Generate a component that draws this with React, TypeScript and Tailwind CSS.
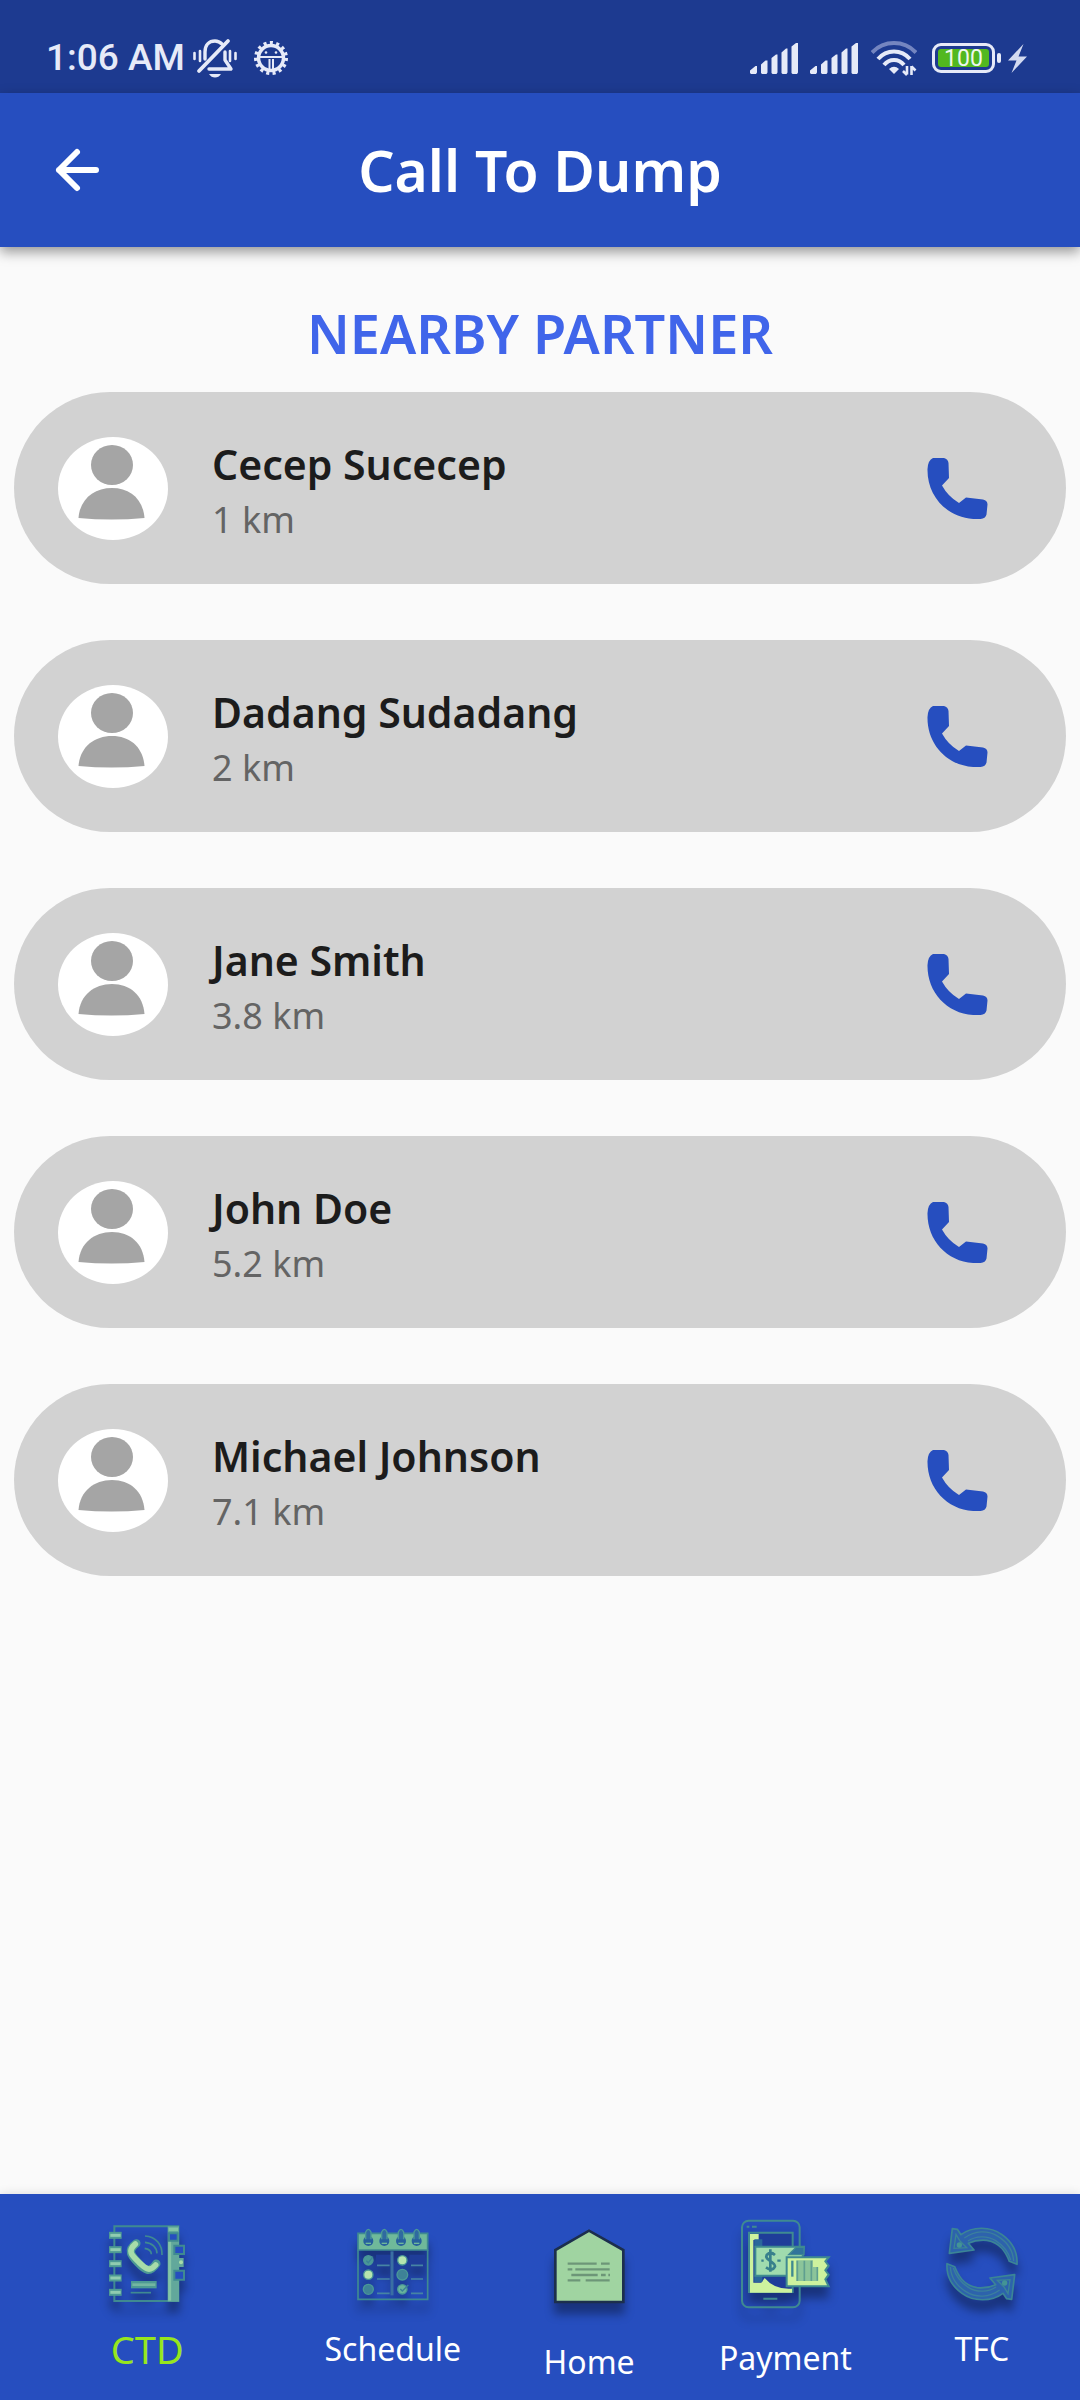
import type { ReactNode } from "react";

const partners = [
  { name: "Cecep Sucecep", distance: "1 km" },
  { name: "Dadang Sudadang", distance: "2 km" },
  { name: "Jane Smith", distance: "3.8 km" },
  { name: "John Doe", distance: "5.2 km" },
  { name: "Michael Johnson", distance: "7.1 km" },
];

function BellOffIcon() {
  return (
    <svg className="h-10 w-11" viewBox="0 0 44 40" fill="none" stroke="#e6eaf8" strokeWidth="3.4" strokeLinecap="round" aria-hidden="true">
      <path d="M12 21V14C12 7 16 3 22 3c3 0 5 1 7 3" />
      <path d="M6 33L35 3" strokeWidth="3.8" />
      <path d="M32 14v8l6 9H16" strokeLinejoin="round" />
      <path d="M16 36h12c-1.500 2.500-3.500 3.500-6 3.500s-4.500-1-6-3.500z" fill="#e6eaf8" stroke="none" />
      <path d="M1.500 15v6M7 13v10M37 13v10M42.500 15v6" strokeWidth="2.600" />
    </svg>
  );
}

function GearIcon() {
  return (
    <svg className="size-9" viewBox="0 0 36 36" fill="none" stroke="#e6eaf8" aria-hidden="true">
      <circle cx="18" cy="18" r="15" strokeWidth="4" strokeDasharray="3 3.283" />
      <circle cx="18" cy="18" r="12.500" strokeWidth="3.500" />
      <path d="M6 17h24M16.500 19v13M20 19v13" strokeWidth="2" />
      <circle cx="13" cy="12.500" r="1.300" fill="#e6eaf8" stroke="none" />
      <circle cx="23" cy="12.500" r="1.300" fill="#e6eaf8" stroke="none" />
    </svg>
  );
}

function SignalIcon() {
  return (
    <svg className="h-[31px] w-12" viewBox="0 0 48 31" fill="#e6eaf8" aria-hidden="true">
      <path d="M0 27.500L5.500 23H7v6.500L6 31H1L0 30zM11 21.500L15.500 17.500H17.500V29.500L16.500 31H12L11 30zM21.500 15L26 11.500H27.500V29.500L26.500 31H22.500L21.500 30zM31.500 9.500L36 5.500H37.500V29.500L36.500 31H32.500L31.500 30zM41.500 3.500L46 0H48V29.500L47 31H42.500L41.500 30z" />
    </svg>
  );
}

function WifiIcon() {
  return (
    <svg className="h-[35px] w-[46px]" viewBox="0 0 46 35" fill="none" stroke="#e6eaf8" strokeWidth="4" aria-hidden="true">
      <path d="M1 11.500Q10 2 23 2T45 11.500" stroke="#7485c0" />
      <path d="M7 18Q13.500 10.500 23 10.500T39 18" />
      <path d="M13 24Q17 19 23 19T33 24" />
      <path d="M18 28q5-4.500 10 0l-5 5z" fill="#e6eaf8" stroke="none" />
      <path d="M36 25v8.500M40.500 34v-9M32 30l4 4M40.500 25.500l4 4" strokeWidth="2.600" />
    </svg>
  );
}

function StatusBar() {
  return (
    <div className="flex h-[93px] items-center justify-between bg-[#1d3a90] pt-[23px] pr-[53px] pl-[46px]">
      <div className="flex items-center">
        <span className="font-[Roboto,sans-serif] text-[37px] leading-10 font-medium text-[#e6eaf8]">1:06 AM</span>
        <span className="ml-2">
          <BellOffIcon />
        </span>
        <span className="ml-4">
          <GearIcon />
        </span>
      </div>
      <div className="flex items-center">
        <SignalIcon />
        <span className="ml-3">
          <SignalIcon />
        </span>
        <span className="ml-[13px]">
          <WifiIcon />
        </span>
        <span className="ml-[15px] flex h-[30px] w-[63px] rounded-[9px] border-[3px] border-[#e6eaf8] p-[3px]">
          <span className="flex flex-1 items-center justify-center rounded-[3px] bg-[#52b81f] font-[Roboto,sans-serif] text-[23px] leading-none text-[#eef7ee]">
            100
          </span>
        </span>
        <span className="ml-[2px] h-[10px] w-1 rounded-sm bg-[#e6eaf8]" />
        <svg className="ml-[7px] h-[29px] w-[19px]" viewBox="0 0 19 29" fill="#d3daf1" aria-hidden="true">
          <path d="M15.500 0L0 16.500h8.500L3.500 29 19 12.500h-8.500z" />
        </svg>
      </div>
    </div>
  );
}

function Header() {
  return (
    <header className="grid h-[154px] grid-cols-[1fr_auto_1fr] items-center bg-[#264ebf] px-[54px] shadow-[0_5px_12px_rgba(0,0,0,0.4)]">
      <button type="button" aria-label="Back" className="w-12 text-white">
        <svg className="size-12" viewBox="0 0 48 48" fill="none" stroke="currentColor" strokeWidth="6" strokeLinecap="round" strokeLinejoin="round" aria-hidden="true">
          <path d="M23 6L5 24l18 18M5 24h37" />
        </svg>
      </button>
      <h1 className="text-[57px] leading-[64px] font-semibold text-white">Call To Dump</h1>
    </header>
  );
}

function Avatar() {
  return (
    <svg className="h-[103px] w-[110px] shrink-0" viewBox="0 0 110 103" aria-hidden="true">
      <ellipse cx="55" cy="51.500" rx="55" ry="51.500" fill="#fff" />
      <ellipse cx="54" cy="28" rx="21" ry="20" fill="#a5a5a5" />
      <path d="M20.500 81C22 62 36 51 54 51s31 11 32.500 30q-33 3-66 0z" fill="#a5a5a5" />
    </svg>
  );
}

function PartnerCard({ name, distance }: { name: string; distance: string }) {
  return (
    <li className="flex h-48 items-center rounded-full bg-[#d2d2d2] pr-[78px] pl-11">
      <Avatar />
      <div className="ml-11 flex-1 pt-2">
        <h3 className="text-[41px] leading-[56px] font-semibold text-[#1c1c1c]">{name}</h3>
        <p className="text-[36px] leading-[56px] text-[#646464]">{distance}</p>
      </div>
      <button type="button" aria-label={`Call ${name}`} className="text-[#264ebf]">
        <svg className="h-[61px] w-[61px]" viewBox="0 0 61 61" fill="currentColor" aria-hidden="true">
          <path d="M6 0h11q4 1 4.500 5l.5 15-7 7.500q6 11 17 17.500l7-5.500 17 2q4.500 1 4.500 5l-1 10q-1 4-6 4.500C23 63 0 40 .5 11Q1 2 6 0z" />
        </svg>
      </button>
    </li>
  );
}

function NavIcon({ viewBox, children }: { viewBox: string; children: ReactNode }) {
  return (
    <svg
      className="size-[90px] overflow-visible drop-shadow-[0_11px_5px_rgba(0,0,0,0.35)]"
      viewBox={viewBox}
      fill="none"
      stroke="#3f8a91"
      strokeWidth="6"
      aria-hidden="true"
    >
      {children}
    </svg>
  );
}

function ContactsIcon() {
  return (
    <NavIcon viewBox="69 111 270 270">
      <path d="M106 363V139h192v224z" />
      <path d="M266 139h34v226h-34z" fill="#62a89b" stroke="none" />
      <path d="M272 160v202" stroke="#84c4a6" strokeWidth="9" />
      <path d="M269 148h28" stroke="#84c4a6" strokeWidth="10" />
      <path d="M270 160h26v22h-26zM286 197h29v25h-29zM286 272h29v27h-29z" fill="#264ebf" />
      <path d="M298 234h16v27h-16z" fill="#62a89b" stroke="none" />
      <circle cx="306" cy="247" r="6" fill="#a7dca9" stroke="none" />
      {[166, 209, 251, 294, 337].map((y) => (
        <g key={y}>
          <path d={`M90 ${y}h38`} stroke="#4d9a94" strokeWidth="21" />
          <path d={`M94 ${y}h31`} stroke="#90ccb0" strokeWidth="9" />
        </g>
      ))}
      <path d="M172 190C142 212 158 228 178 249S211 281 232 251" stroke="#4d9a94" strokeWidth="25" strokeLinecap="round" />
      <path d="M169 192C143 214 160 228 180 247S211 277 230 255" stroke="#a7dca9" strokeWidth="17" strokeLinecap="round" strokeLinejoin="round" />
      <path d="M198 168C232 170 250 195 249 225M198 187C220 189 233 203 234 220M197 205C210 207 217 214 217 223" strokeWidth="5" />
      <path d="M156 314h77" stroke="#4d9a94" strokeWidth="22" />
      <path d="M160 314h69" stroke="#73b6a2" strokeWidth="8" />
      <path d="M155 338h61" strokeWidth="5" />
    </NavIcon>
  );
}

function CalendarIcon() {
  return (
    <NavIcon viewBox="144 111 270 270">
      <path d="M228 224h48v30h-48zM328 224h48v30h-48z" fill="#1f3d99" stroke="none" />
      <path d="M174 160h209v50H174z" fill="#6fb99a" strokeWidth="5" />
      <path d="M174 210v148h209V210" strokeWidth="5" />
      <path d="M276 214v132" stroke="#3a6fa3" strokeWidth="9" />
      {[205, 253, 303, 350].map((x) => (
        <g key={x}>
          <circle cx={x} cy="183" r="15" fill="#27609d" stroke="none" />
          <path d={`M${x - 8} 178v-22q8-16 16 0v22`} fill="#2f6aa0" stroke="#4a9897" strokeWidth="4" />
          <path d={`M${x - 8} 190h16`} stroke="#6fb99a" strokeWidth="4" />
        </g>
      ))}
      <g stroke="#4a9897" strokeWidth="4">
        <circle cx="205" cy="241" r="14" fill="#4a9897" />
        <circle cx="205" cy="284" r="14" fill="#b5e5ae" />
        <circle cx="205" cy="328" r="15" fill="#3e8297" />
        <circle cx="307" cy="241" r="14" fill="#b5e5ae" />
        <circle cx="307" cy="284" r="16" fill="#3e8297" />
        <circle cx="307" cy="328" r="14" fill="#69b39c" />
      </g>
      <path d="M231 256h38M231 297h38M231 340h38M333 256h36M333 297h36M333 340h36" stroke="#4684a4" strokeWidth="5" />
      <path d="M199 242l6 6 14-18M301 327l6 6 18-18" stroke="#3a8297" strokeWidth="4" />
    </NavIcon>
  );
}

function LetterIcon() {
  return (
    <NavIcon viewBox="132 111 270 270">
      <path d="M166 366V210l101-58 103 58v156z" fill="#a0d4a1" stroke="#1c2f4d" strokeWidth="8" />
      <path
        d="M203 251h87M303 251h26M203 268h14M226 268h103M214 285h79M303 285h14M325 285h5M203 301h38M257 301h72"
        stroke="#6d9678"
        strokeWidth="7"
      />
    </NavIcon>
  );
}

function PaymentIcon() {
  return (
    <NavIcon viewBox="120 111 270 270">
      <rect x="126" y="122" width="173" height="260" rx="20" strokeWidth="6" />
      <path d="M140 140h8M156 140h14M190 356h42" strokeWidth="6" />
      <path d="M147 158h131v178H147z" fill="#1f3d99" />
      <path d="M150 162h26v18h-16v128h24l10-14q30 36 82 32v12H150z" fill="#cdf29e" stroke="none" />
      <path d="M163 178h24v22h-24zM163 286h24v20h-24z" fill="#2b679b" stroke="none" />
      <path d="M166 200h146l-12 87H166z" fill="#a0dbae" strokeWidth="6" />
      <path d="M288 202h24v22h-46z" fill="#31749b" strokeWidth="4" />
      <path d="M225 225q-13-12-25 0c-8 14 25 20 25 34q-8 17-27 3M211 208v67" stroke="#38808c" strokeWidth="8" />
      <path d="M184 242h7M232 242h10" stroke="#38808c" strokeWidth="7" />
      <path d="M260 232h126l-10 12 10 13-10 14 10 13-10 14 10 21H260z" fill="#cdf29e" />
      <path d="M277 242v48" strokeWidth="7" />
      <path d="M289 241h50v20h15v42h-65z" fill="#8bc49a" stroke="none" />
      <path d="M292 242v61M313 242v61M334 242v61M352 261v41" stroke="#5f9f90" strokeWidth="5" />
    </NavIcon>
  );
}

function RecycleIcon() {
  return (
    <NavIcon viewBox="111 111 270 270">
      <g id="cycle-arrow">
        <path d="M183 164C218 138 272 139 306 164C338 187 353 220 351 253L328 244C318 218 302 188 261 181Q231 178 205 190L222 210 148 220 157 146 172 148z" fill="#2d63ac" stroke="#3b8596" strokeWidth="5" strokeLinejoin="round" />
        <path d="M193 174C225 151 264 150 294 169C325 188 339 216 341 243M204 183C227 167 262 166 287 182C312 198 325 217 332 240" stroke="#3a7f9d" strokeWidth="4" />
        <path d="M168 163l-6 42 38-2-20-20z" fill="#2c62ac" stroke="#3b8596" strokeWidth="4" />
        <circle cx="178" cy="195" r="8" fill="#439495" stroke="none" />
      </g>
      <use href="#cycle-arrow" transform="rotate(180 246 252)" />
    </NavIcon>
  );
}

const tabs = [
  { label: "CTD", icon: <ContactsIcon />, style: "mt-[22px] text-[38px] text-[#97e61e]" },
  { label: "Schedule", icon: <CalendarIcon />, style: "mt-[22px] text-[32px] text-white" },
  { label: "Home", icon: <LetterIcon />, style: "mt-[35px] text-[32px] text-white" },
  { label: "Payment", icon: <PaymentIcon />, style: "mt-[31px] text-[32px] text-white" },
  { label: "TFC", icon: <RecycleIcon />, style: "mt-[22px] text-[32px] text-white" },
];

export default function App() {
  return (
    <div className="flex min-h-screen flex-col bg-[#fafafa] font-['Noto_Sans',sans-serif]">
      <StatusBar />
      <Header />
      <main className="flex-1 px-[14px] pt-[54px]">
        <h2 className="text-center text-[54px] leading-[64px] font-semibold text-[#4065ea]">NEARBY PARTNER</h2>
        <ul className="mt-[27px] flex flex-col gap-14">
          {partners.map((partner) => (
            <PartnerCard key={partner.name} {...partner} />
          ))}
        </ul>
      </main>
      <nav className="grid h-[206px] grid-cols-[3fr_2fr_2fr_2fr_2fr] bg-[#264ebf] pt-[23px] shadow-[0_0_10px_rgba(0,0,0,0.12)]">
        {tabs.map(({ label, icon, style }) => (
          <a key={label} href={`#${label.toLowerCase()}`} className="flex flex-col items-center">
            {icon}
            <span className={`leading-10 ${style}`}>{label}</span>
          </a>
        ))}
      </nav>
    </div>
  );
}
